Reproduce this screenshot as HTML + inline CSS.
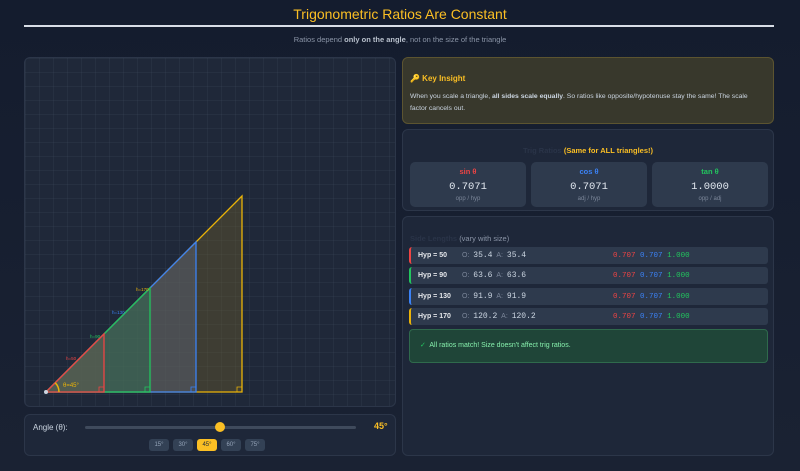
<!DOCTYPE html>
<html><head><meta charset="utf-8"><style>
*{box-sizing:border-box;margin:0;padding:0}
body{width:800px;height:471px;overflow:hidden;background:linear-gradient(180deg,#141c2e,#1a2233);font-family:"Liberation Sans","DejaVu Sans",sans-serif;color:#cbd5e1;position:relative}
h1{position:absolute;top:6px;left:0;width:800px;text-align:center;font-size:14px;font-weight:normal;color:#fbbf24}
.rule{position:absolute;top:25px;left:24px;width:750px;height:1.5px;background:#d8dde6}
.sub{position:absolute;top:35px;width:800px;text-align:center;font-size:7.5px;color:#8a94a6}
.sub b{color:#b8c0cc}
.panel{position:absolute;background:#1e2739;border:1px solid #2c3649;border-radius:6px}
.mono{font-family:"Liberation Mono","DejaVu Sans Mono",monospace}
.card{position:absolute;top:32px;width:116px;height:45px;background:#2e3a4d;border-radius:5px;text-align:center}
.card .t{font-size:7.5px;margin-top:5px;font-weight:bold}
.card .v{font-size:10.5px;color:#e2e8f0;margin-top:5px}
.card .s{font-size:6px;color:#7b8699;margin-top:3px}
.row{position:absolute;left:6px;width:359px;height:17px;background:#2e3a4d;border-radius:3px;font-size:7px}
.row>span{position:absolute;top:0;height:17px;line-height:17px;white-space:nowrap}
.row .h{left:7px;color:#e5e7eb;font-weight:bold}
.row .o{left:51px;color:#7b8699}
.row .o span{color:#cbd5e1;font-family:"Liberation Mono",monospace;font-size:8px}
.row>.r{left:202px;top:1px;font-family:"Liberation Mono",monospace;font-size:7.5px}
.btns{position:absolute;left:124px;top:24px;display:flex;gap:4px}
.btn{width:20px;height:12px;background:#334155;border-radius:3px;font-size:6px;line-height:12px;text-align:center;color:#94a3b8}
</style></head><body>
<h1>Trigonometric Ratios Are Constant</h1>
<div class="rule"></div>
<div class="sub">Ratios depend <b>only on the angle</b>, not on the size of the triangle</div>

<div class="panel" style="left:24px;top:57px;width:372px;height:350px;background-color:#1f2839;background-image:linear-gradient(rgba(100,116,139,.1) 1px,transparent 1px),linear-gradient(90deg,rgba(100,116,139,.1) 1px,transparent 1px);background-size:14px 14px">
<svg width="372" height="350" style="position:absolute;left:-1px;top:-1px">
<g stroke-width="1.3">
<polygon points="22,335 218,335 218,139" fill="rgba(120,100,40,.35)" stroke="#eab308"/>
<polygon points="22,335 172,335 172,185" fill="rgba(90,100,120,.45)" stroke="#3b82f6"/>
<polygon points="22,335 126,335 126,231" fill="rgba(34,120,80,.35)" stroke="#22c55e"/>
<polygon points="22,335 80,335 80,277" fill="rgba(100,90,80,.5)" stroke="#ef4444"/>
</g>
<g fill="none" stroke-width=".8">
<path d="M213 335v-5h5" stroke="#eab308"/><path d="M167 335v-5h5" stroke="#3b82f6"/><path d="M121 335v-5h5" stroke="#22c55e"/><path d="M75 335v-5h5" stroke="#ef4444"/>
<path d="M35 335a13 13 0 0 0 -3.8 -9.2" stroke="#eab308" stroke-width="1.5"/>
</g>
<circle cx="22" cy="335" r="2" fill="#cbd5e1"/>
<g font-size="4.5" font-family="Liberation Sans">
<text x="42" y="303" fill="#ef4444">h=50</text>
<text x="66" y="281" fill="#22c55e">h=90</text>
<text x="88" y="257" fill="#3b82f6">h=130</text>
<text x="112" y="234" fill="#eab308">h=170</text>
<text x="39" y="330" fill="#eab308" font-size="6">θ=45°</text>
</g>
</svg>
</div>

<div class="panel" style="left:24px;top:414px;width:372px;height:42px">
<div style="position:absolute;left:8px;top:8px;font-size:8px;color:#cbd5e1">Angle (θ):</div>
<div style="position:absolute;left:60px;top:11px;width:271px;height:3px;background:#3f4a5c;border-radius:2px"></div>
<div style="position:absolute;left:190px;top:7px;width:10px;height:10px;background:#fbbf24;border-radius:50%"></div>
<div style="position:absolute;left:349px;top:6px;font-size:9px;font-weight:bold;color:#fbbf24">45°</div>
<div class="btns"><span class="btn">15°</span><span class="btn">30°</span><span class="btn" style="background:#fbbf24;color:#1e293b">45°</span><span class="btn">60°</span><span class="btn">75°</span></div>
</div>

<div class="panel" style="left:402px;top:57px;width:372px;height:67px;background:#38382c;border-color:#5c5430">
<div style="position:absolute;left:7px;top:16px;font-size:8px;font-weight:bold;color:#fbbf24">🔑 Key Insight</div>
<div style="position:absolute;left:7px;top:33px;width:355px;font-size:6.8px;line-height:12px;color:#cbd5e1">When you scale a triangle, <b>all sides scale equally</b>. So ratios like opposite/hypotenuse stay the same! The scale factor cancels out.</div>
</div>

<div class="panel" style="left:402px;top:129px;width:372px;height:82px">
<div style="position:absolute;top:16px;width:100%;text-align:center;font-size:7.5px;font-weight:bold"><span style="color:#2a3448">Trig Ratios</span> <span style="color:#fbbf24">(Same for ALL triangles!)</span></div>
<div class="card" style="left:7px"><div class="t" style="color:#ef4444">sin θ</div><div class="v mono">0.7071</div><div class="s">opp / hyp</div></div>
<div class="card" style="left:128px"><div class="t" style="color:#3b82f6">cos θ</div><div class="v mono">0.7071</div><div class="s">adj / hyp</div></div>
<div class="card" style="left:249px"><div class="t" style="color:#22c55e">tan θ</div><div class="v mono">1.0000</div><div class="s">opp / adj</div></div>
</div>

<div class="panel" style="left:402px;top:216px;width:372px;height:240px">
<div style="position:absolute;left:7px;top:17px;font-size:7.5px"><span style="color:#2a3448;font-weight:bold">Side Lengths</span> <span style="color:#8a94a6">(vary with size)</span></div>
<div class="row" style="top:30px;border-left:2px solid #ef4444"><span class="h">Hyp = 50</span><span class="o">O: &nbsp;<span>35.4</span> &nbsp;A: &nbsp;<span>35.4</span></span><span class="r"><span style="color:#ef4444">0.707</span> <span style="color:#3b82f6">0.707</span> <span style="color:#22c55e">1.000</span></span></div>
<div class="row" style="top:50px;border-left:2px solid #22c55e"><span class="h">Hyp = 90</span><span class="o">O: &nbsp;<span>63.6</span> &nbsp;A: &nbsp;<span>63.6</span></span><span class="r"><span style="color:#ef4444">0.707</span> <span style="color:#3b82f6">0.707</span> <span style="color:#22c55e">1.000</span></span></div>
<div class="row" style="top:71px;border-left:2px solid #3b82f6"><span class="h">Hyp = 130</span><span class="o">O: &nbsp;<span>91.9</span> &nbsp;A: &nbsp;<span>91.9</span></span><span class="r"><span style="color:#ef4444">0.707</span> <span style="color:#3b82f6">0.707</span> <span style="color:#22c55e">1.000</span></span></div>
<div class="row" style="top:91px;border-left:2px solid #eab308"><span class="h">Hyp = 170</span><span class="o">O: &nbsp;<span>120.2</span> &nbsp;A: &nbsp;<span>120.2</span></span><span class="r"><span style="color:#ef4444">0.707</span> <span style="color:#3b82f6">0.707</span> <span style="color:#22c55e">1.000</span></span></div>
<div style="position:absolute;left:6px;top:112px;width:359px;height:34px;background:#1f4538;border:1px solid #2f6a4c;border-radius:4px;font-size:7px;color:#86efac;line-height:32px;padding-left:10px"><span style="color:#22c55e">✓</span>&nbsp; All ratios match! Size doesn't affect trig ratios.</div>
</div>
</body></html>
